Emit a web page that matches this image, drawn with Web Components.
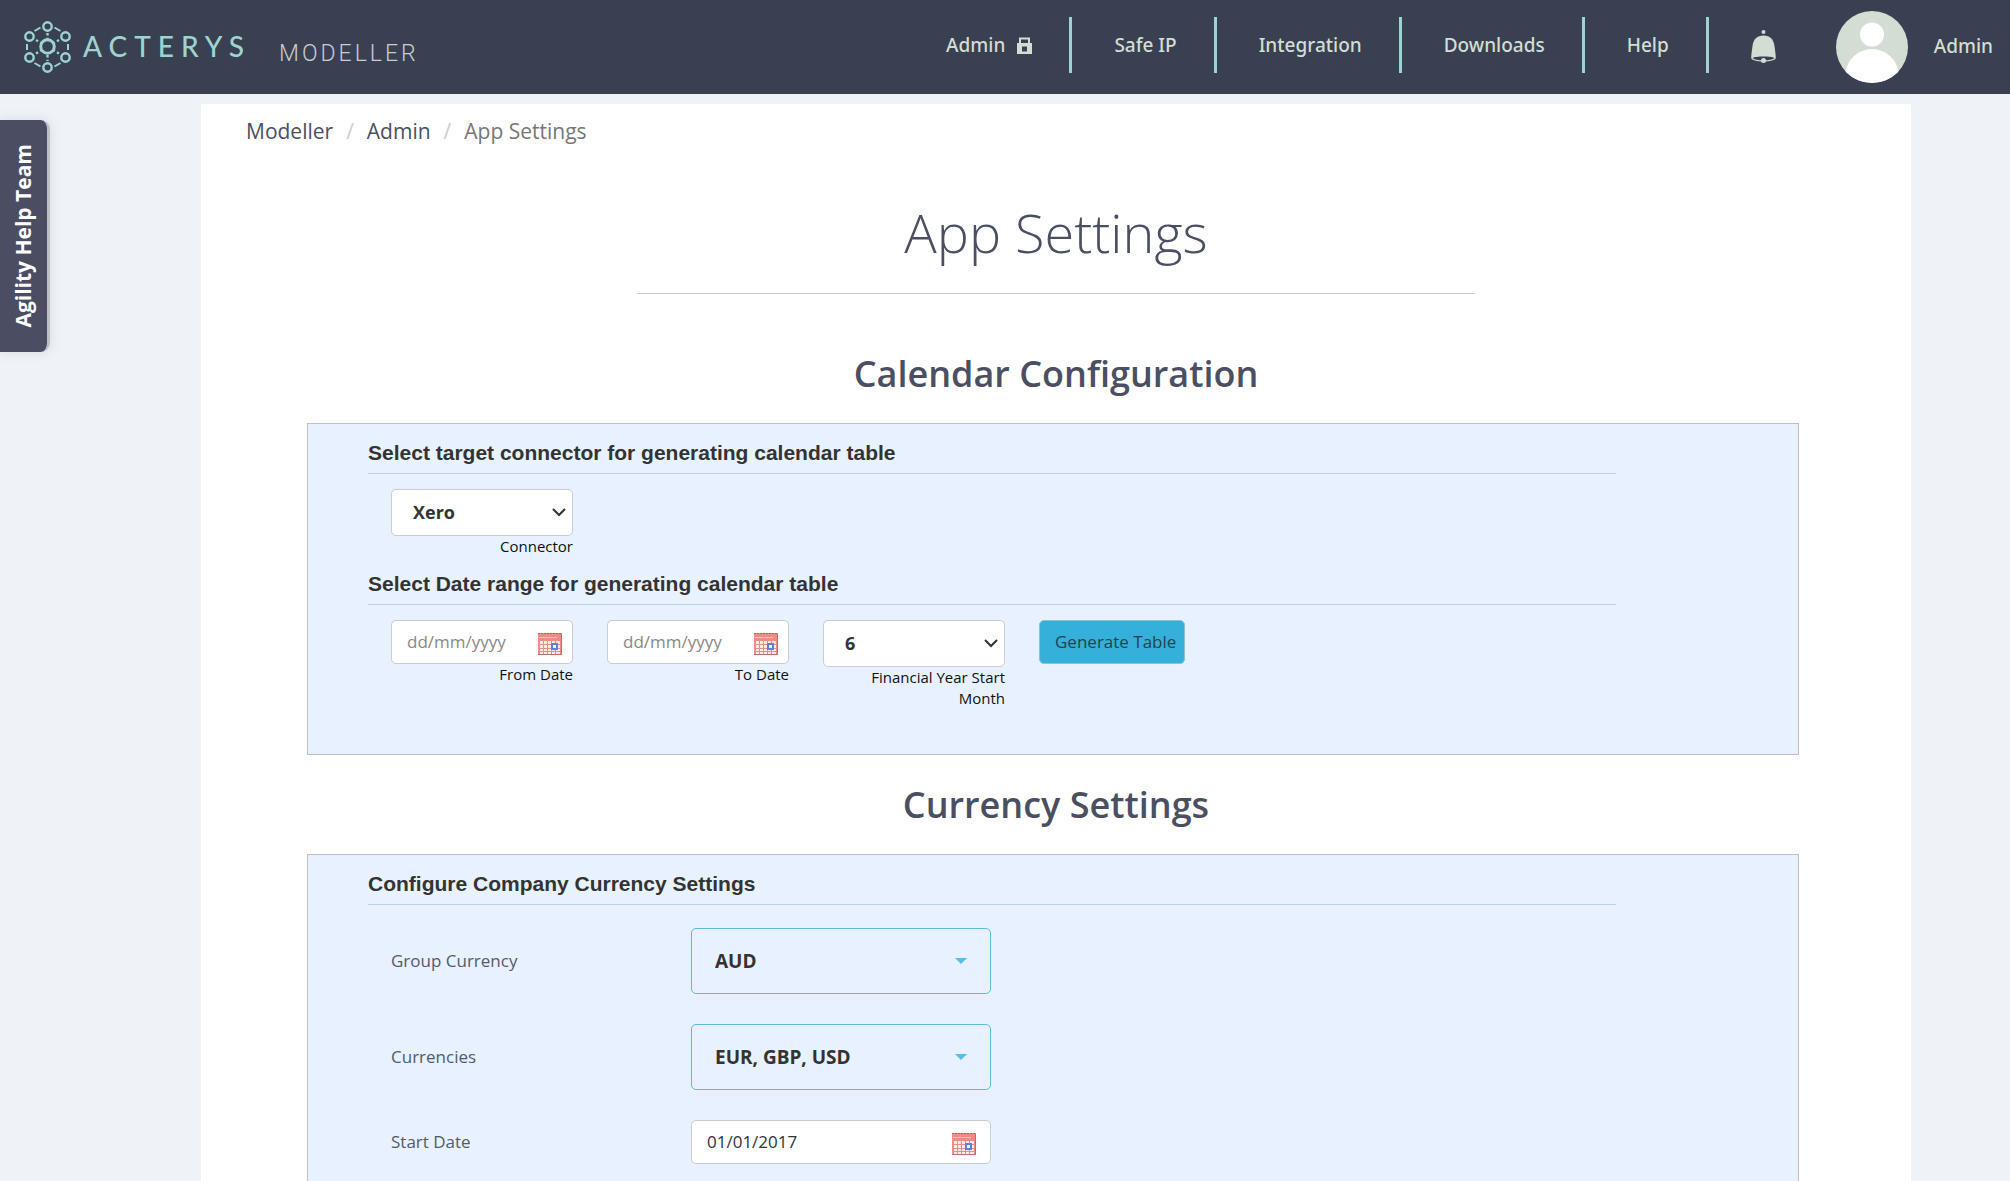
<!DOCTYPE html>
<html lang="en">
<head>
<meta charset="utf-8">
<meta name="viewport" content="width=device-width, initial-scale=1">
<title>App Settings - Acterys Modeller</title>
<style>
  :root {
    --header-bg: #394051;
    --header-text: #d3ddd3;
    --accent: #9ed3cf;
    --page-bg: #eff3f8;
    --panel-bg: #e7f1ff;
    --panel-border: #bfc1c7;
    --rule: #bdd0e6;
    --heading: #4b4f62;
    --text: #333;
    --label: #555a6b;
  }

  body {
    margin: 0;
    font-family: "Open Sans", "Noto Sans", sans-serif;
    background: var(--page-bg);
    color: var(--text);
  }
</style>
</head>
<body>
<settings-app></settings-app>

<script>
class AppLogo extends HTMLElement {
  constructor() {
    super();
    this.attachShadow({ mode: "open" });
  }

  connectedCallback() {
    this.shadowRoot.innerHTML = `
      <style>
        :host {
          display: flex;
          align-items: center;
          color: var(--accent);
        }

        svg {
          flex: none;
          margin-right: 12px;
        }

        .brand {
          font-family: Lato, sans-serif;
          font-size: 28px;
          font-weight: 500;
          line-height: 36px;
          letter-spacing: 7px;
          margin-right: 28px;
          padding-bottom: 2px;
        }

        .product {
          font-family: Roboto, sans-serif;
          font-size: 23px;
          font-weight: 300;
          line-height: 28px;
          letter-spacing: 3px;
          color: #c9ccd3;
          padding-top: 14px;
        }
      </style>
      <svg width="48" height="54" viewBox="0 0 48 54" fill="none" stroke="currentColor" stroke-width="2.4">
        <circle cx="24.500" cy="26.500" r="6.800" stroke-width="3"/>
        <circle cx="24.500" cy="6.500" r="4.200"/>
        <circle cx="24.500" cy="47.500" r="4.200"/>
        <circle cx="6.500" cy="16.500" r="4.200"/>
        <circle cx="42.500" cy="16.500" r="4.200"/>
        <circle cx="6.500" cy="37.500" r="4.200"/>
        <circle cx="42.500" cy="37.500" r="4.200"/>
        <path stroke-width="2" d="M11.500 11l6-3.500M31.500 7.500l6 3.500M11.500 43l6 3.500M31.500 46.500l6-3.500M4 24v6M45 24v6"/>
        <path stroke-dasharray="2.400 2.400" d="M24.500 13v6M24.500 35v6M13 20l5.500 3.200M36 20l-5.500 3.200M13 33.500l5.500-3.200M36 33.500l-5.500-3.200"/>
      </svg>
      <span class="brand">ACTERYS</span>
      <span class="product">MODELLER</span>
    `;
  }
}

class NavItem extends HTMLElement {
  constructor() {
    super();
    this.attachShadow({ mode: "open" });
  }

  connectedCallback() {
    this.shadowRoot.innerHTML = `
      <style>
        :host {
          display: flex;
          align-items: center;
          height: 56px;
          box-sizing: border-box;
          padding: 0 37px 0 42px;
          border-right: 3px solid var(--accent);
        }

        a {
          display: flex;
          align-items: center;
          gap: 12px;
          color: var(--header-text);
          text-decoration: none;
        }
      </style>
      <a href="#"><slot></slot></a>
    `;
  }
}

class AppHeader extends HTMLElement {
  constructor() {
    super();
    this.attachShadow({ mode: "open" });
  }

  connectedCallback() {
    this.shadowRoot.innerHTML = `
      <style>
        :host {
          display: flex;
          box-sizing: border-box;
          height: 94px;
          padding: 0 17px 0 23px;
          background: var(--header-bg);
          color: var(--header-text);
          font: 500 19px/26px "Noto Sans", sans-serif;
        }

        nav {
          display: flex;
          align-items: flex-start;
          margin-left: auto;
          padding-top: 17px;
        }

        .user {
          display: flex;
          align-items: center;
          align-self: center;
        }

        button {
          border: 0;
          padding: 0;
          background: none;
          color: inherit;
          display: flex;
          margin: 0 59px 0 41px;
        }

        .avatar {
          margin-right: 26px;
        }

        .user a {
          color: inherit;
          text-decoration: none;
          padding-bottom: 3px;
        }
      </style>
      <app-logo></app-logo>
      <nav>
        <nav-item>Admin
          <svg width="15" height="17" viewBox="0 0 15 17" fill="none">
            <path d="M3 7V1.500h9V7" stroke="currentColor" stroke-width="2"/>
            <path d="M0 6h15v11H0zM5 9.500v5h5v-5z" fill="currentColor" fill-rule="evenodd"/>
          </svg>
        </nav-item>
        <nav-item>Safe IP</nav-item>
        <nav-item>Integration</nav-item>
        <nav-item>Downloads</nav-item>
        <nav-item>Help</nav-item>
      </nav>
      <div class="user">
        <button type="button" aria-label="Notifications">
          <svg width="27" height="36" viewBox="0 0 27 36" fill="currentColor">
            <circle cx="13.500" cy="3" r="2"/>
            <path fill-rule="evenodd" d="M13.500 6.500C20 6.500 23.500 10 24.500 17c.7 5 1.300 9.500 1.300 12 0 2-6 3.500-12.300 3.500S1.200 31 1.200 29c0-2.500.6-7 1.300-12 1-7 4.500-10.500 11-10.500zM2.500 29c1.500 1.500 6 2.300 11 2.300s9.500-.8 11-2.300c-1.500-1-6-1.500-11-1.500s-9.500.5-11 1.500z"/>
            <circle cx="13.500" cy="31.500" r="2.500"/>
          </svg>
        </button>
        <svg class="avatar" width="72" height="72" viewBox="0 0 72 72">
          <defs><clipPath id="round"><circle cx="36" cy="36" r="36"/></clipPath></defs>
          <g clip-path="url(#round)">
            <rect width="72" height="72" fill="#d3ddd3"/>
            <circle cx="36" cy="23.500" r="12" fill="#fff"/>
            <circle cx="36" cy="65" r="27" fill="#fff"/>
          </g>
        </svg>
        <a href="#">Admin</a>
      </div>
    `;
  }
}

class HelpTab extends HTMLElement {
  constructor() {
    super();
    this.attachShadow({ mode: "open" });
  }

  connectedCallback() {
    this.shadowRoot.innerHTML = `
      <style>
        :host {
          position: absolute;
          left: 0;
          top: 120px;
        }

        button {
          box-sizing: border-box;
          width: 50px;
          height: 232px;
          padding: 6px 2px 0 0;
          border: 0;
          border-right: 3px solid #bfbfc8;
          border-radius: 0 9px 9px 0;
          background: #4b4e62;
          color: #fff;
          font: bold 21px/28px "Open Sans", sans-serif;
          box-shadow: 0 0 12px rgba(75, 78, 98, 0.15);
        }

        span {
          display: inline-block;
          writing-mode: vertical-rl;
          transform: rotate(180deg);
        }
      </style>
      <button type="button"><span><slot></slot></span></button>
    `;
  }
}

class BreadCrumb extends HTMLElement {
  constructor() {
    super();
    this.attachShadow({ mode: "open" });
  }

  connectedCallback() {
    this.shadowRoot.innerHTML = `
      <style>
        :host {
          display: block;
          padding: 13px 45px 0;
          font-size: 21px;
          line-height: 28px;
        }

        nav {
          display: flex;
          gap: 13px;
        }

        a {
          color: var(--heading);
          text-decoration: none;
        }

        .sep {
          color: #ccc;
        }

        .current {
          color: #777;
        }
      </style>
      <nav aria-label="Breadcrumb">
        <a href="#">Modeller</a><span class="sep">/</span>
        <a href="#">Admin</a><span class="sep">/</span>
        <span class="current">App Settings</span>
      </nav>
    `;
  }
}

class SettingsPanel extends HTMLElement {
  constructor() {
    super();
    this.attachShadow({ mode: "open" });
  }

  connectedCallback() {
    this.shadowRoot.innerHTML = `
      <style>
        :host {
          display: block;
        }

        h2 {
          margin: 0;
          padding: 26px 0 25px;
          font-size: 36px;
          font-weight: 600;
          line-height: 48px;
          text-align: center;
          color: var(--heading);
        }

        .box {
          display: flex;
          flex-direction: column;
          gap: 15px;
          margin: 0 112px 0 106px;
          padding: 17px 182px 45px 60px;
          border: 1px solid var(--panel-border);
          background: var(--panel-bg);
        }
      </style>
      <h2>${this.getAttribute("heading") || ""}</h2>
      <div class="box"><slot></slot></div>
    `;
  }
}

class PanelGroup extends HTMLElement {
  constructor() {
    super();
    this.attachShadow({ mode: "open" });
  }

  connectedCallback() {
    this.shadowRoot.innerHTML = `
      <style>
        :host {
          display: block;
        }

        h3 {
          margin: 0;
          padding-bottom: 8px;
          border-bottom: 1px solid var(--rule);
          font: bold 21px/24px "Liberation Sans", Arial, sans-serif;
        }

        .fields {
          display: flex;
          flex-wrap: wrap;
          align-items: flex-start;
          gap: 34px;
          padding: 15px 0 0 23px;
        }

        :host([rows]) .fields {
          flex-direction: column;
          flex-wrap: nowrap;
          gap: 30px;
          padding-top: 23px;
        }
      </style>
      <h3>${this.getAttribute("heading") || ""}</h3>
      <div class="fields"><slot></slot></div>
    `;
  }
}

// Control with a caption below it, or beside it when "inline" is set.
// kind: "select", "date" or "picker"
class FormField extends HTMLElement {
  constructor() {
    super();
    this.attachShadow({ mode: "open" });
  }

  connectedCallback() {
    this.render();
  }

  calendarIcon() {
    return `
      <svg class="calendar" width="24" height="24" viewBox="0 0 24 24">
        <rect y="1" width="24" height="22" fill="#ee8d85"/>
        <path d="M0 1.500h24" stroke="#a9655f" stroke-dasharray="2 1"/>
        <rect x="1" y="3" width="22" height="5" fill="#f08a83"/>
        <path d="M1 5.500h18" stroke="#f9c0bb"/>
        <path fill="#fdeeed" d="M2 9h3v3H2zM6 9h3v3H6zM10 9h3v3h-3zM14 9h3v3h-3zM18 9h4v3h-4zM2 13h3v3H2zM6 13h3v3H6zM10 13h3v3h-3zM18 13h4v3h-4zM2 17h3v2H2zM6 17h3v2H6zM10 17h3v2h-3zM14 17h3v2h-3zM18 17h4v2h-4zM2 20h3v2H2zM6 20h3v2H6zM10 20h3v2h-3zM14 20h3v2h-3zM18 20h4v2h-4z"/>
        <rect x="14" y="12" width="5" height="5" fill="#eef4ff" stroke="#5b83dc" stroke-width="2"/>
        <path d="M23.500 2v20.500H0" fill="none" stroke="#b8706a"/>
      </svg>`;
  }

  control() {
    const kind = this.getAttribute("kind");
    const value = this.getAttribute("value") || "";
    if (kind === "date") {
      return `<input id="control" type="text" placeholder="dd/mm/yyyy" value="${value}">${this.calendarIcon()}`;
    }
    const arrow = kind === "picker"
      ? `<svg class="arrow" width="12" height="6" viewBox="0 0 12 6"><path d="M0 0h12L6 6z" fill="#58bbf0"/></svg>`
      : `<svg class="arrow" width="14" height="9" viewBox="0 0 14 9"><path d="M1 1l6 6 6-6" fill="none" stroke="#333" stroke-width="2"/></svg>`;
    return `<select id="control"><option>${value}</option></select>${arrow}`;
  }

  render() {
    this.shadowRoot.innerHTML = `
      <style>
        :host {
          display: flex;
          flex-direction: column-reverse;
          width: 182px;
        }

        :host([inline]) {
          display: grid;
          grid-template-columns: 300px 300px;
          align-items: center;
          width: auto;
        }

        label {
          font-size: 15px;
          line-height: 21px;
          text-align: right;
          color: #111;
        }

        :host([inline]) label {
          font-size: 17px;
          line-height: 24px;
          text-align: left;
          color: var(--label);
        }

        .control {
          display: grid;
          align-items: center;
        }

        .control > * {
          grid-area: 1 / 1;
        }

        input, select {
          appearance: none;
          box-sizing: border-box;
          width: 100%;
          margin: 0;
          border: 1px solid #ccc;
          border-radius: 5px;
          background: #fff;
          color: var(--text);
          font-family: inherit;
        }

        input {
          height: 44px;
          padding: 0 44px 2px 15px;
          font-size: 17px;
        }

        input::placeholder {
          color: #888;
        }

        select {
          height: 47px;
          padding: 0 30px 2px 21px;
          font-size: 18px;
          font-weight: 700;
        }

        :host([kind="picker"]) select {
          height: 66px;
          padding: 0 40px 0 23px;
          border-color: #5cbcdc;
          background: transparent;
          font-size: 19px;
        }

        svg {
          justify-self: end;
          margin-right: 7px;
          pointer-events: none;
        }

        :host([kind="picker"]) .arrow {
          margin-right: 24px;
        }

        .calendar {
          margin: 3px 11px 0 0;
        }

        :host([inline]) .calendar {
          margin-right: 15px;
        }
      </style>
      <label for="control">${this.getAttribute("label") || ""}</label>
      <div class="control">${this.control()}</div>
    `;
  }
}

class ActionButton extends HTMLElement {
  constructor() {
    super();
    this.attachShadow({ mode: "open" });
  }

  connectedCallback() {
    this.shadowRoot.innerHTML = `
      <style>
        :host {
          display: block;
        }

        button {
          height: 44px;
          padding: 0 8px 0 15px;
          border: 1px solid #8fbfd2;
          border-radius: 5px;
          background: #35b0da;
          color: #24424f;
          font: 17px/24px "Open Sans", sans-serif;
        }
      </style>
      <button type="button"><slot></slot></button>
    `;
  }
}

class SettingsApp extends HTMLElement {
  constructor() {
    super();
    this.attachShadow({ mode: "open" });
  }

  connectedCallback() {
    this.shadowRoot.innerHTML = `
      <style>
        :host {
          display: flex;
          flex-direction: column;
          height: 100vh;
        }

        app-header {
          flex: none;
        }

        .scroll {
          flex: 1;
          min-height: 0;
          overflow-y: auto;
          scrollbar-width: none;
          padding: 10px 99px 0 10%;
        }

        main {
          background: #fff;
          padding-bottom: 40px;
        }

        h1 {
          width: 49%;
          margin: 48px auto 30px;
          padding-bottom: 22px;
          border-bottom: 1px solid #c3cbca;
          font-size: 54px;
          font-weight: 300;
          line-height: 78px;
          text-align: center;
          color: var(--heading);
        }
      </style>
      <app-header></app-header>
      <help-tab>Agility Help Team</help-tab>
      <div class="scroll">
        <main>
          <bread-crumb></bread-crumb>
          <h1>App Settings</h1>
          <settings-panel heading="Calendar Configuration">
            <panel-group heading="Select target connector for generating calendar table">
              <form-field kind="select" label="Connector" value="Xero"></form-field>
            </panel-group>
            <panel-group heading="Select Date range for generating calendar table">
              <form-field kind="date" label="From Date"></form-field>
              <form-field kind="date" label="To Date"></form-field>
              <form-field kind="select" label="Financial Year Start Month" value="6"></form-field>
              <action-button>Generate Table</action-button>
            </panel-group>
          </settings-panel>
          <settings-panel heading="Currency Settings">
            <panel-group rows heading="Configure Company Currency Settings">
              <form-field inline kind="picker" label="Group Currency" value="AUD"></form-field>
              <form-field inline kind="picker" label="Currencies" value="EUR, GBP, USD"></form-field>
              <form-field inline kind="date" label="Start Date" value="01/01/2017"></form-field>
            </panel-group>
          </settings-panel>
        </main>
      </div>
    `;
  }
}

customElements.define("app-logo", AppLogo);
customElements.define("nav-item", NavItem);
customElements.define("app-header", AppHeader);
customElements.define("help-tab", HelpTab);
customElements.define("bread-crumb", BreadCrumb);
customElements.define("settings-panel", SettingsPanel);
customElements.define("panel-group", PanelGroup);
customElements.define("form-field", FormField);
customElements.define("action-button", ActionButton);
customElements.define("settings-app", SettingsApp);
</script>
</body>
</html>
